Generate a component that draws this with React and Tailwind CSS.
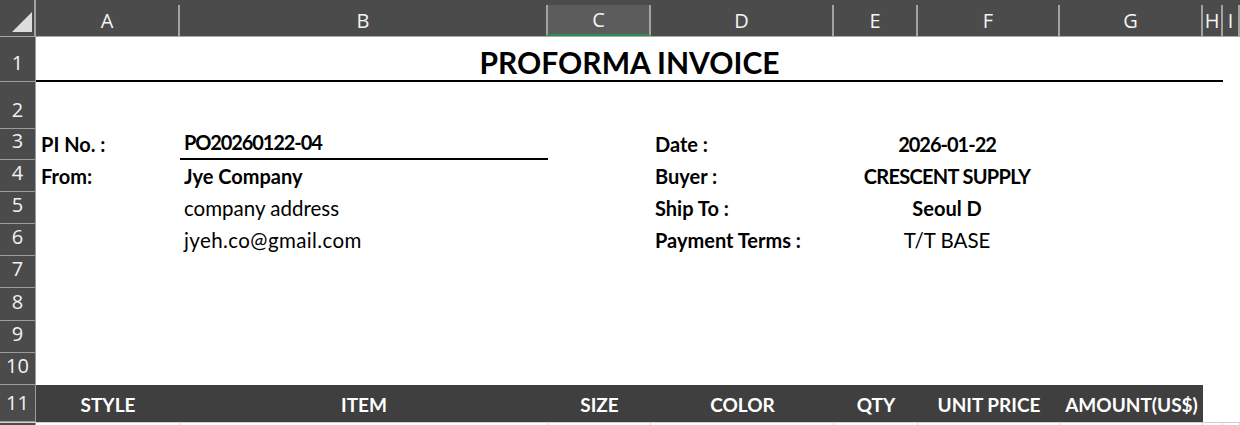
const COLS =
  'grid grid-cols-[36px_144px_368px_103px_183px_84px_142px_143px_20px_1fr]';

const LETTERS = ['A', 'B', 'C', 'D', 'E', 'F', 'G', 'H', 'I'];

function ColHeader({ letter }) {
  const selected = letter === 'C';
  return (
    <div className="flex flex-col pt-[5px]">
      <div
        className={
          'flex-1 flex items-center justify-center border-r-2 border-[#a3a3a3] ' +
          (selected ? 'bg-[#5c5c5c] border-l-2 border-b-2 border-b-[#2e8b57] -ml-[2px]' : '')
        }
      >
        <span className="text-[20px] leading-[24px] text-[#f4f4f4] font-['Open_Sans',_sans-serif]">
          {letter}
        </span>
      </div>
    </div>
  );
}

function RowNum({ n }) {
  return (
    <div className="bg-[#4b4b4b] border-b border-r border-[#9c9c9c] flex items-end justify-center pb-[6px] text-[20px] leading-[24px] text-[#f2f2f2] font-['Open_Sans',_sans-serif]">
      {n}
    </div>
  );
}

function Cell({ children, bold, center, className = '' }) {
  return (
    <div
      className={
        'flex items-end pb-[4px] px-[4px] text-black whitespace-nowrap ' +
        (bold ? 'font-bold text-[20px] leading-[24px] ' : 'text-[20.5px] leading-[24px] ') +
        (center ? 'justify-center ' : '') +
        className
      }
    >
      {children}
    </div>
  );
}

function InfoRow({ n, h, a, b, bBold, underline, d, ef, efBold = true }) {
  return (
    <div className={`${COLS} ${h}`}>
      <RowNum n={n} />
      <Cell bold className="pl-[5px]">{a}</Cell>
      <Cell bold={bBold} className={underline ? 'border-b-2 border-black' : ''}>
        {b}
      </Cell>
      <Cell />
      <Cell bold>{d}</Cell>
      <Cell bold={efBold} center className="col-span-2">
        {ef}
      </Cell>
      <Cell />
      <Cell />
      <Cell />
    </div>
  );
}

function EmptyRow({ n, h }) {
  return (
    <div className={`${COLS} ${h}`}>
      <RowNum n={n} />
      <div className="col-span-9" />
    </div>
  );
}

const HEADS = ['STYLE', 'ITEM', 'SIZE', 'COLOR', 'QTY', 'UNIT PRICE', 'AMOUNT(US$)'];

export default function App() {
  return (
    <div className="w-[1240px] h-[425px] overflow-hidden bg-white font-['Lato',_sans-serif]">
      <div className={`${COLS} h-[37px] bg-[#4b4b4b] border-b border-[#a8a8a8]`}>
        <div className="flex items-end justify-end border-r-2 border-[#a3a3a3]">
          <svg width="34" height="36" viewBox="0 0 34 36">
            <polygon points="12,32 32,32 32,12" fill="#dcdcdc" />
          </svg>
        </div>
        {LETTERS.map((l) => (
          <ColHeader key={l} letter={l} />
        ))}
      </div>

      <div className={`${COLS} h-[45px]`}>
        <RowNum n={1} />
        <div className="col-span-8 flex items-end justify-center border-b-2 border-black">
          <span className="text-[30px] leading-[36px] font-bold text-black">PROFORMA INVOICE</span>
        </div>
        <div />
      </div>

      <EmptyRow n={2} h="h-[47px]" />

      <InfoRow
        n={3}
        h="h-[31px]"
        a="PI No. :"
        b={<span className="tracking-[-1.1px]">PO20260122-04</span>}
        bBold
        underline
        d="Date :"
        ef={<span className="tracking-[-1px]">2026-01-22</span>}
      />
      <InfoRow
        n={4}
        h="h-[32px]"
        a="From:"
        b="Jye Company"
        bBold
        d="Buyer :"
        ef={<span className="tracking-[-0.7px]">CRESCENT SUPPLY</span>}
      />
      <InfoRow n={5} h="h-[32px]" b="company address" d="Ship To :" ef="Seoul D" />
      <InfoRow
        n={6}
        h="h-[32px]"
        b={<span className="tracking-[0.4px]">jyeh.co@gmail.com</span>}
        d="Payment Terms :"
        ef="T/T BASE"
        efBold={false}
      />

      <EmptyRow n={7} h="h-[32px]" />
      <EmptyRow n={8} h="h-[33px]" />
      <EmptyRow n={9} h="h-[32px]" />
      <EmptyRow n={10} h="h-[32px]" />

      <div className={`${COLS} h-[37px]`}>
        <RowNum n={11} />
        {HEADS.map((t) => (
          <div
            key={t}
            className="bg-[#3f3f3f] flex items-end justify-center pb-[6px] text-[19px] leading-[23px] font-bold text-white whitespace-nowrap"
          >
            {t}
          </div>
        ))}
        <div />
        <div />
      </div>

      <div className={`${COLS} h-[20px] border-t border-[#d0d0d0]`}>
        <div className="bg-[#4b4b4b] border-r border-[#9c9c9c]" />
        {LETTERS.map((l) => (
          <div key={l} className="border-r border-[#d4d4d4]" />
        ))}
      </div>
    </div>
  );
}
